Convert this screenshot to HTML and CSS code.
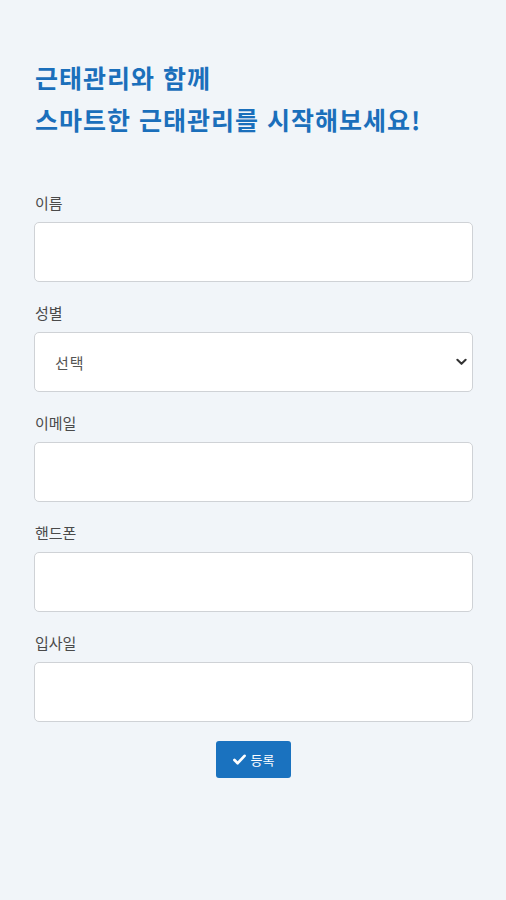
FILE: index.html
```html
<!DOCTYPE html>
<html lang="ko">
<head>
<meta charset="utf-8">
<title>근태관리 등록</title>
<link rel="stylesheet" href="styles.css">
</head>
<body>
<main class="page">
  <h1 class="title">근태관리와 함께<br>스마트한 근태관리를 시작해보세요!</h1>
  <form class="form">
    <div class="field">
      <label class="label">이름</label>
      <input class="control" type="text">
    </div>
    <div class="field">
      <label class="label">성별</label>
      <div class="select-wrap">
        <select class="control select">
          <option>선택</option>
          <option>남</option>
          <option>여</option>
        </select>
        <svg class="chev" viewBox="0 0 12 8" width="11" height="8"><path d="M1.5 1.5 L6 6 L10.5 1.5" fill="none" stroke="#333" stroke-width="2.2" stroke-linecap="round" stroke-linejoin="round"/></svg>
      </div>
    </div>
    <div class="field">
      <label class="label">이메일</label>
      <input class="control" type="text">
    </div>
    <div class="field">
      <label class="label">핸드폰</label>
      <input class="control" type="text">
    </div>
    <div class="field">
      <label class="label">입사일</label>
      <input class="control" type="text">
    </div>
    <div class="actions">
      <button type="button" class="btn">
        <svg class="check" viewBox="0 0 14 12" width="13" height="11"><path d="M1.5 6.5 L5 10 L12.5 2" fill="none" stroke="#fff" stroke-width="3" stroke-linecap="round" stroke-linejoin="round"/></svg>
        <span>등록</span>
      </button>
    </div>
  </form>
</main>
</body>
</html>
```
FILE: styles.css
```css
html, body {
  margin: 0;
  padding: 0;
  background: #f1f5f9;
  font-family: "Noto Sans CJK KR", "Noto Sans", sans-serif;
}
.page {
  padding: 56px 33px 40px 34px;
}
.title {
  margin: 0 0 53px 1px;
  font-size: 25px;
  line-height: 42px;
  font-weight: 700;
  color: #1b6fbb;
  letter-spacing: 1px;
}
.form {
  display: flex;
  flex-direction: column;
}
.field {
  display: flex;
  flex-direction: column;
  margin-bottom: 21px;
}
.label {
  font-size: 15px;
  line-height: 20px;
  color: #4a4a4a;
  margin: 0 0 9px 1px;
}
.control {
  box-sizing: border-box;
  width: 100%;
  height: 60px;
  margin: 0;
  border: 1px solid #cfd2d6;
  border-radius: 5px;
  background: #fff;
  font-family: inherit;
  font-size: 15px;
  color: #555;
  padding: 0 12px;
  outline: none;
}
.select-wrap {
  position: relative;
}
.select {
  appearance: none;
  -webkit-appearance: none;
  padding-left: 20px;
  letter-spacing: 1px;
}
.chev {
  position: absolute;
  right: 6px;
  top: 26px;
  pointer-events: none;
}
.actions {
  display: flex;
  justify-content: center;
  margin-top: -2px;
}
.btn {
  display: flex;
  align-items: center;
  gap: 5px;
  width: 75px;
  height: 37px;
  justify-content: center;
  border: none;
  border-radius: 3px;
  background: #1a72bf;
  color: #fff;
  font-family: inherit;
  font-size: 13px;
  padding: 0;
}
.check {
  display: block;
}
```
